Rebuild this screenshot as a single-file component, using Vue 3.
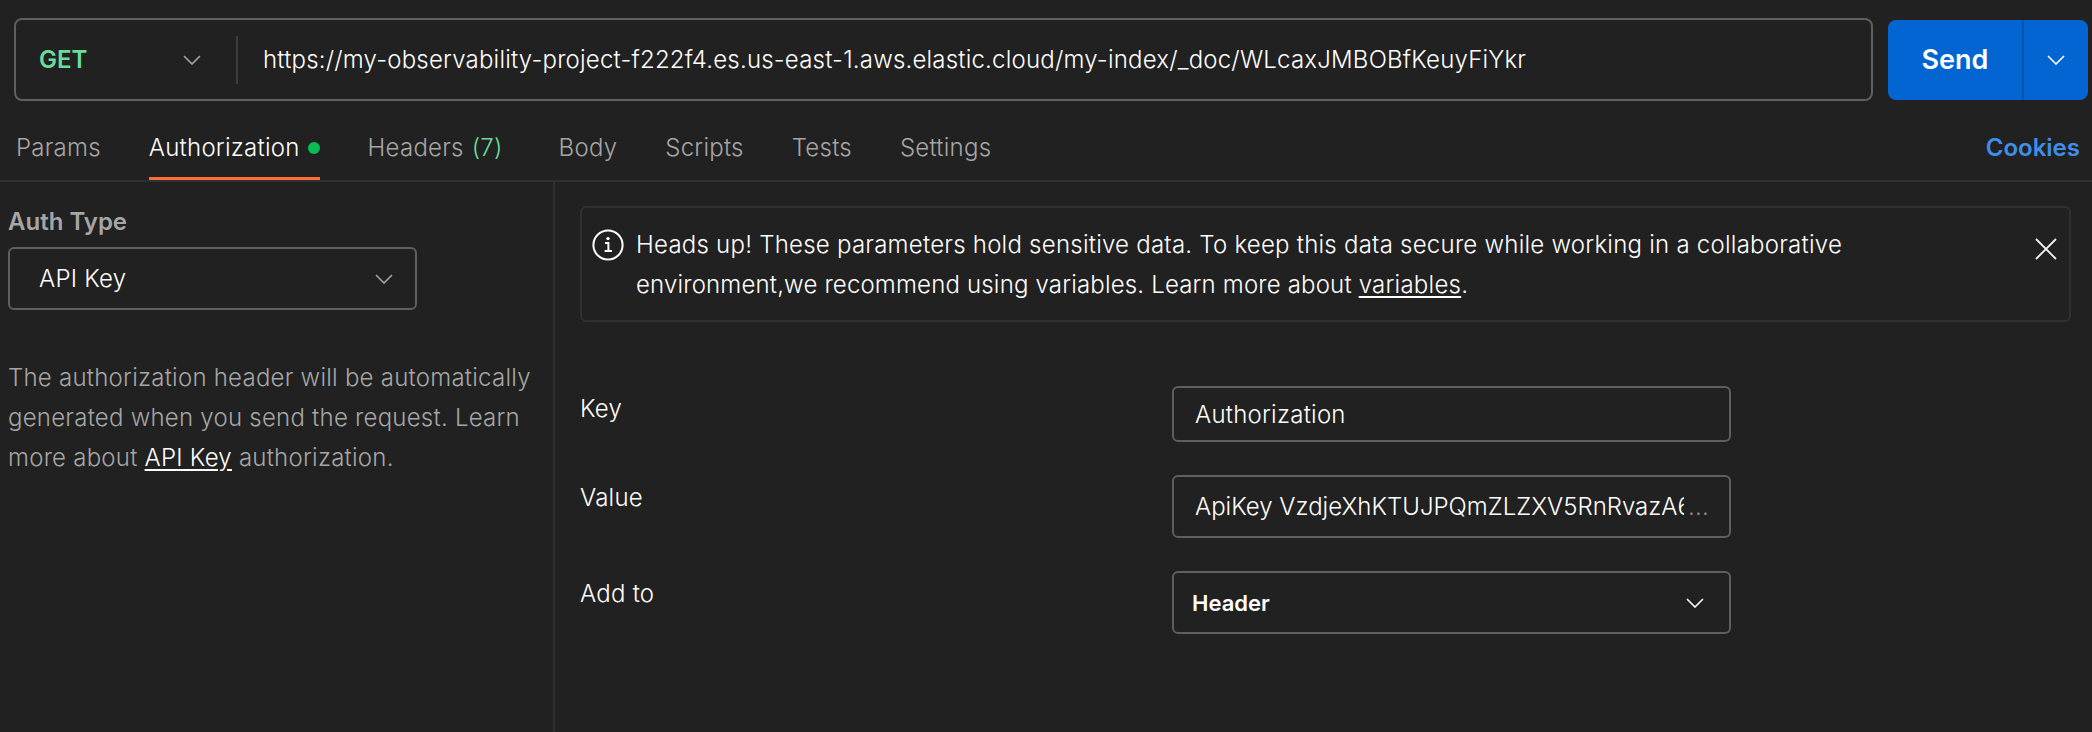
<script setup>
const tabs = [
  { label: 'Params' },
  { label: 'Authorization', active: true, dot: true },
  { label: 'Headers', count: '(7)', wide: true },
  { label: 'Body' },
  { label: 'Scripts' },
  { label: 'Tests' },
  { label: 'Settings' }
]
</script>

<template>
  <div class="page">
    <div class="bar">
      <div class="url-box">
        <div class="method">
          <span class="method-name">GET</span>
          <svg class="chev" width="18" height="10" viewBox="0 0 18 10"><path d="M1 1l8 8 8-8" /></svg>
        </div>
        <div class="url">https://my-observability-project-f222f4.es.us-east-1.aws.elastic.cloud/my-index/_doc/WLcaxJMBOBfKeuyFiYkr</div>
      </div>
      <div class="send">
        <div class="send-main">Send</div>
        <div class="send-more">
          <svg class="chev chev-white" width="18" height="10" viewBox="0 0 18 10"><path d="M1 1l8 8 8-8" /></svg>
        </div>
      </div>
    </div>

    <div class="tabs">
      <div v-for="t in tabs" :key="t.label" class="tab" :class="{ active: t.active, wide: t.wide }">
        <span>{{ t.label }}</span>
        <span v-if="t.count" class="count">{{ t.count }}</span>
        <span v-if="t.dot" class="dot"></span>
      </div>
      <div class="cookies">Cookies</div>
    </div>

    <div class="content">
      <aside class="side">
        <div class="auth-label">Auth Type</div>
        <div class="select auth-select">
          <span class="auth-value">API Key</span>
          <svg class="chev" width="18" height="10" viewBox="0 0 18 10"><path d="M1 1l8 8 8-8" /></svg>
        </div>
        <p class="desc">The authorization header will be automatically generated when you send the request. Learn more about <a class="link">API Key</a> authorization.</p>
      </aside>

      <main class="main">
        <div class="notice">
          <svg class="info" width="32" height="32" viewBox="0 0 32 32">
            <circle cx="16" cy="16" r="14.6" />
            <path d="M13 14h3.4v8M12.6 22h7.4" />
            <circle class="info-dot" cx="16" cy="9.6" r="1.7" />
          </svg>
          <div class="notice-text">Heads up! These parameters hold sensitive data. To keep this data secure while working in a collaborative <span class="tight">environment,we recommend using variables. Learn more about </span><a class="link">variables</a>.</div>
          <svg class="close" width="22" height="22" viewBox="0 0 22 22"><path d="M1 1l20 20M21 1L1 21" /></svg>
        </div>

        <div class="form">
          <div class="row row-key">
            <div class="label">Key</div>
            <div class="input input-key">Authorization</div>
          </div>
          <div class="row row-value">
            <div class="label">Value</div>
            <div class="input input-value">
              <span class="clip">ApiKey VzdjeXhKTUJPQmZLZXV5RnRvazA6</span>
              <span class="more">...</span>
            </div>
          </div>
          <div class="row row-add">
            <div class="label">Add to</div>
            <div class="input input-add">
              <span>Header</span>
              <svg class="chev chev-white" width="18" height="10" viewBox="0 0 18 10"><path d="M1 1l8 8 8-8" /></svg>
            </div>
          </div>
        </div>
      </main>
    </div>
  </div>
</template>

<style>
html, body { margin: 0; background: #212121; }
</style>

<style scoped>
.page {
  width: 2092px;
  height: 732px;
  background: #212121;
  color: #fff;
  font-family: Inter, "Noto Sans", sans-serif;
  font-size: 24px;
  font-weight: 300;
  letter-spacing: 0.24px;
  display: flex;
  flex-direction: column;
  overflow: hidden;
}
.chev { fill: none; stroke: #a6a6a6; stroke-width: 1.6; flex: none; }
.chev-white { stroke: #fff; }

.bar { display: flex; height: 101px; padding: 18px 4px 0 14px; box-sizing: border-box; gap: 15px; }
.url-box {
  width: 1859px; height: 83px; box-sizing: border-box;
  border: 2px solid #5f5f5f; border-radius: 8px;
  display: flex; align-items: center;
}
.method {
  width: 222px; height: 48px; box-sizing: border-box;
  padding: 0 35px 0 23px;
  border-right: 2px solid #3d3d3d;
  display: flex; align-items: center; justify-content: space-between;
}
.method-name { color: #6bdd9a; font-weight: 600; font-size: 24px; letter-spacing: 0; }
.url { padding-left: 25px; white-space: nowrap; color: #fff; letter-spacing: 0.2px; }
.send {
  width: 200px; height: 80px; margin-top: 2px;
  background: #0265d2; border-radius: 8px;
  display: flex; font-weight: 600; font-size: 27px; letter-spacing: 0;
}
.send-main { width: 134px; padding-bottom: 2px; display: flex; align-items: center; justify-content: center; border-right: 2px solid #0353ac; }
.send-more { flex: 1; display: flex; align-items: center; justify-content: center; }

.tabs {
  height: 81px; box-sizing: border-box;
  border-bottom: 2px solid #303030;
  padding: 0 12px 0 16px;
  display: flex; gap: 48px;
}
.tab {
  display: flex; align-items: center; gap: 8px;
  color: #a6a6a6; height: 79px; box-sizing: border-box; padding-top: 17px;
  border-bottom: 3px solid transparent; white-space: nowrap;
}
.tab.active { color: #fff; border-bottom-color: #ff6c37; }
.tab.wide { margin-right: 8px; }
.count { color: #6bdd9a; }
.dot { width: 12px; height: 12px; border-radius: 50%; background: #0cbb52; }
.cookies { margin-left: auto; height: 79px; box-sizing: border-box; padding-top: 17px; display: flex; align-items: center; color: #3f8fe8; font-weight: 600; padding-bottom: 3px; letter-spacing: 0; }

.content { flex: 1; display: flex; min-height: 0; }
.side { width: 555px; box-sizing: border-box; border-right: 2px solid #303030; padding: 25px 20px 0 8px; flex: none; }
.auth-label { color: #a6a6a6; font-weight: 600; font-size: 24px; line-height: 30px; letter-spacing: 0; }
.select {
  margin-top: 10px; box-sizing: border-box;
  border: 2px solid #5f5f5f; border-radius: 6px;
}
.auth-select {
  width: 409px; height: 63px; padding: 0 22px 0 29px;
  display: flex; align-items: center; justify-content: space-between;
}
.desc { margin: 48px 0 0; color: #a6a6a6; line-height: 40px; }
.link { color: #fff; text-decoration: underline; text-underline-offset: 3px; }

.main { flex: 1; padding: 24px 21px 0 25px; min-width: 0; }
.notice {
  height: 116px; box-sizing: border-box;
  border: 2px solid #303030; border-radius: 6px;
  display: flex; align-items: flex-start;
  padding: 20px 12px 0 10px;
}
.info { flex: none; margin-top: 1px; fill: none; stroke: #fff; stroke-width: 2; }
.info-dot { fill: #fff; stroke: none; }
.notice-text { margin-left: 12px; flex: 1; line-height: 40px; margin-top: -3px; max-width: 1340px; }
.tight { letter-spacing: 0.17px; }
.close { flex: none; margin-left: auto; margin-top: 10px; fill: none; stroke: #f2f2f2; stroke-width: 1.8; }

.form { position: relative; }
.row { display: flex; justify-content: space-between; align-items: flex-start; width: 1151px; }
.label { line-height: 32px; color: #fff; }
.row-key { margin-top: 64px; }
.row-key .label { margin-top: 7px; }
.row-value { margin-top: 33px; }
.row-value .label { margin-top: 7px; }
.row-add { margin-top: 33px; }
.row-add .label { margin-top: 7px; }
.input {
  width: 559px; box-sizing: border-box;
  border: 2px solid #5f5f5f; border-radius: 6px;
  display: flex; align-items: center;
  padding-left: 21px;
  white-space: nowrap;
}
.input-key { height: 56px; }
.input-value { height: 63px; padding-right: 20px; }
.clip { flex: 1; min-width: 0; overflow: hidden; letter-spacing: 0; }
.more { color: #8a8a8a; margin-left: 4px; }
.input-add {
  height: 63px; padding: 0 25px 0 18px; justify-content: space-between;
  font-weight: 600; font-size: 22px; letter-spacing: 0;
}
</style>
